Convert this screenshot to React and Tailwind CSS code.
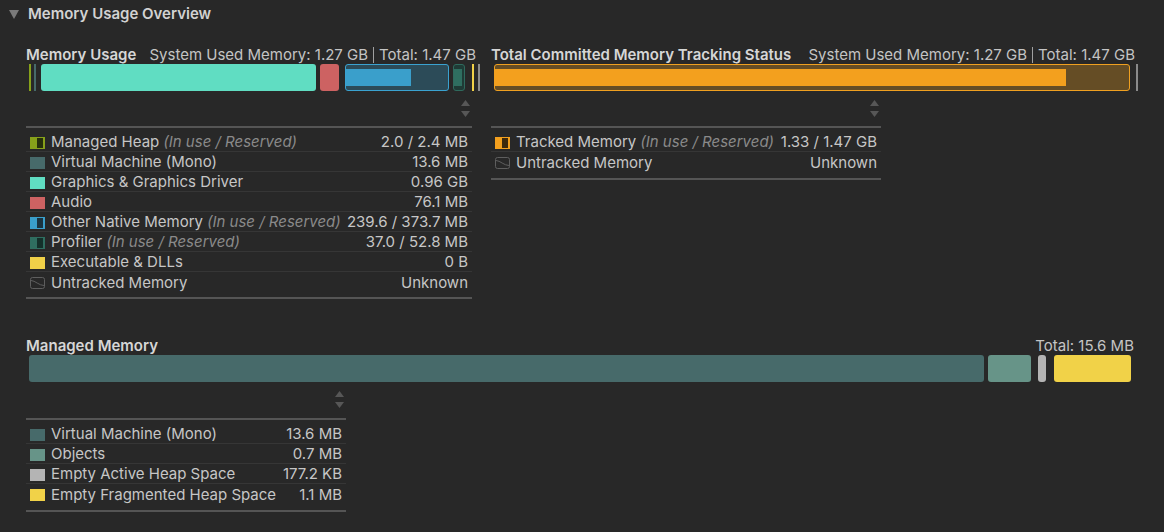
import React from 'react';

const font = { fontFamily: 'Inter, "Noto Sans", sans-serif' };

const Arrows = () => (
  <svg width="9" height="17" viewBox="0 0 9 17">
    <path d="M0 6 L4.5 0 L9 6 Z" fill="#575757" />
    <path d="M0 11 L9 11 L4.5 17 Z" fill="#575757" />
  </svg>
);

const Swatch = ({ color }) => <span className="w-[15px] h-[12px] shrink-0" style={{ background: color }} />;

// in use / reserved swatch: solid left, dark inner block on the right
const SplitSwatch = ({ color, dark }) => (
  <span className="relative w-[15px] h-[12px] shrink-0" style={{ background: color }}>
    <span className="absolute left-[7px] top-[1px] w-[6px] h-[10px]" style={{ background: dark }} />
  </span>
);

const Untracked = () => (
  <svg width="15" height="12" viewBox="0 0 15 12" className="shrink-0">
    <rect x="0.5" y="0.5" width="14" height="11" rx="2" fill="none" stroke="#5e5e5e" />
    <path d="M1 3.5 C5 3.5 9 8.5 14 8.5" fill="none" stroke="#5e5e5e" />
  </svg>
);

const Row = ({ icon, label, note, value }) => (
  <div className="flex items-center h-5 pt-[2px] pl-1 pr-1">
    {icon}
    <span className="ml-[6px] text-[#c6c6c6] whitespace-nowrap">{label}</span>
    {note && <span className="ml-[4px] italic text-[#8a8a8a] whitespace-nowrap">{note}</span>}
    <span className="ml-auto pl-1 text-[#c6c6c6] whitespace-nowrap">{value}</span>
  </div>
);

const Table = ({ width, pb, children }) => (
  <div className={`${width} border-t-2 border-b-2 border-[#555555] pt-[4px] ${pb}`}>
    <div className="divide-y divide-[#363636]">{children}</div>
  </div>
);

const Stats = () => (
  <span className="ml-auto flex items-center text-[#c4c4c4] whitespace-nowrap">
    <span>System Used Memory: 1.27 GB</span>
    <span className="mx-[5px] w-px h-[16px] bg-[#a0a0a0]" />
    <span>Total: 1.47 GB</span>
  </span>
);

const USE = '(In use / Reserved)';

export default function App() {
  return (
    <div className="w-[1164px] h-[532px] bg-[#282828] text-[15px] overflow-hidden" style={font}>
      <div className="h-[26px] flex items-center pt-[2px] pl-[9px]">
        <svg width="10" height="9" viewBox="0 0 10 9">
          <path d="M0 0 L10 0 L5 9 Z" fill="#7a7a7a" />
        </svg>
        <span className="ml-[9px] font-semibold text-[#d2d2d2]">Memory Usage Overview</span>
      </div>

      <div className="mt-[18px] flex pl-[26px]">
        {/* Memory usage */}
        <div className="w-[454px] flex flex-col">
          <div className="h-5 flex items-center pt-[2px] pr-1">
            <span className="font-semibold text-[#d6d6d6] whitespace-nowrap">Memory Usage</span>
            <Stats />
          </div>
          <div className="h-[27px] flex pl-[3px]">
            <span className="w-[2px] bg-[#87a11a]" />
            <span className="ml-[3px] w-[2px] bg-[#476a6a]" />
            <span className="ml-[5px] w-[275px] rounded-[3px] bg-[#60ddc2]" />
            <span className="ml-[4px] w-[19px] rounded-[3px] bg-[#cd6262]" />
            <span className="ml-[6px] w-[104px] rounded-[3px] border border-[#3aa2d0] bg-[#2c4b58] flex items-center">
              <span className="w-[65px] h-[17px] bg-[#3a9fcb]" />
            </span>
            <span className="ml-[4px] w-[12px] rounded-[3px] border border-[#2f6a5d] bg-[#1f3b36] flex items-center">
              <span className="w-[8px] h-[17px] bg-[#2f6e60]" />
            </span>
            <span className="ml-[7px] w-[2px] bg-[#f0d048]" />
            <span className="ml-[4px] w-[2px] bg-[#8a8a8a]" />
          </div>
          <div className="h-[35px] w-[446px] flex justify-end pt-[9px] pr-[2px]">
            <Arrows />
          </div>
          <Table width="w-[446px]" pb="pb-[5px]">
            <Row icon={<SplitSwatch color="#87a11a" dark="#26300c" />} label="Managed Heap" note={USE} value="2.0 / 2.4 MB" />
            <Row icon={<Swatch color="#476a6a" />} label="Virtual Machine (Mono)" value="13.6 MB" />
            <Row icon={<Swatch color="#60ddc2" />} label="Graphics & Graphics Driver" value="0.96 GB" />
            <Row icon={<Swatch color="#cd6262" />} label="Audio" value="76.1 MB" />
            <Row icon={<SplitSwatch color="#3a9fcb" dark="#1b3440" />} label="Other Native Memory" note={USE} value="239.6 / 373.7 MB" />
            <Row icon={<SplitSwatch color="#2f6e60" dark="#14302a" />} label="Profiler" note={USE} value="37.0 / 52.8 MB" />
            <Row icon={<Swatch color="#f0d048" />} label="Executable & DLLs" value="0 B" />
            <Row icon={<Untracked />} label="Untracked Memory" value="Unknown" />
          </Table>
        </div>

        {/* Committed memory */}
        <div className="ml-[11px] w-[647px] flex flex-col">
          <div className="h-5 flex items-center pt-[2px] pr-[3px]">
            <span className="font-semibold text-[#d6d6d6] whitespace-nowrap">Total Committed Memory Tracking Status</span>
            <Stats />
          </div>
          <div className="h-[27px] flex pl-[3px]">
            <span className="w-[636px] rounded-[3px] border border-[#f0a020] bg-[#654d25] flex items-center">
              <span className="w-[571px] h-[17px] bg-[#f3a01e]" />
            </span>
            <span className="ml-[6px] w-[2px] bg-[#8a8a8a]" />
          </div>
          <div className="h-[35px] w-[390px] flex justify-end pt-[9px] pr-[2px]">
            <Arrows />
          </div>
          <Table width="w-[390px]" pb="pb-[6px]">
            <Row icon={<SplitSwatch color="#f3a01e" dark="#3e2a0c" />} label="Tracked Memory" note={USE} value="1.33 / 1.47 GB" />
            <Row icon={<Untracked />} label="Untracked Memory" value="Unknown" />
          </Table>
        </div>
      </div>

      {/* Managed memory */}
      <div className="mt-[36px] pl-[26px] w-[1138px] flex flex-col">
        <div className="h-5 flex items-center pt-[2px] pr-[4px]">
          <span className="font-semibold text-[#d6d6d6]">Managed Memory</span>
          <span className="ml-auto text-[#c4c4c4]">Total: 15.6 MB</span>
        </div>
        <div className="h-[27px] flex pl-[3px]">
          <span className="w-[955px] rounded-[3px] bg-[#476a6a]" />
          <span className="ml-[4px] w-[43px] rounded-[3px] bg-[#679488]" />
          <span className="ml-[7px] w-[8px] rounded-[3px] bg-[#b4b4b4]" />
          <span className="ml-[8px] w-[77px] rounded-[3px] bg-[#f1d248]" />
        </div>
        <div className="h-[36px] w-[320px] flex justify-end pt-[9px] pr-[2px]">
          <Arrows />
        </div>
        <Table width="w-[320px]" pb="pb-[6px]">
          <Row icon={<Swatch color="#476a6a" />} label="Virtual Machine (Mono)" value="13.6 MB" />
          <Row icon={<Swatch color="#679488" />} label="Objects" value="0.7 MB" />
          <Row icon={<Swatch color="#b4b4b4" />} label="Empty Active Heap Space" value="177.2 KB" />
          <Row icon={<Swatch color="#f1d248" />} label="Empty Fragmented Heap Space" value="1.1 MB" />
        </Table>
      </div>
    </div>
  );
}
